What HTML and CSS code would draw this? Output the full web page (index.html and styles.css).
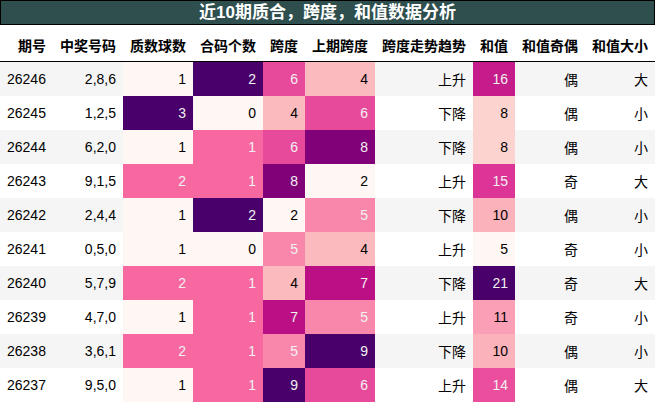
FILE: index.html
```html
<!DOCTYPE html>
<html lang="zh">
<head>
<meta charset="utf-8">
<link rel="stylesheet" href="styles.css">
</head>
<body>
<div class="wrap">
  <div class="title">近10期质合，跨度，和值数据分析</div>
  <table class="grid">
    <colgroup>
      <col class="w53"><col class="w70"><col class="w70"><col class="w70"><col class="w42"><col class="w70"><col class="w98"><col class="w42"><col class="w70"><col class="w70">
    </colgroup>
    <thead>
      <tr><th>期号</th><th>中奖号码</th><th>质数球数</th><th>合码个数</th><th>跨度</th><th>上期跨度</th><th>跨度走势趋势</th><th>和值</th><th>和值奇偶</th><th>和值大小</th></tr>
    </thead>
    <tbody>
      <tr class="odd"><td>26246</td><td>2,8,6</td><td style="background:#fff7f3" class="dk">1</td><td style="background:#49006a" class="lt">2</td><td style="background:#e84a9b" class="lt">6</td><td style="background:#fbbabd" class="dk">4</td><td>上升</td><td style="background:#c61b8b" class="lt">16</td><td>偶</td><td>大</td></tr>
      <tr><td>26245</td><td>1,2,5</td><td style="background:#49006a" class="lt">3</td><td style="background:#fff7f3" class="dk">0</td><td style="background:#fbbabd" class="dk">4</td><td style="background:#e84a9b" class="lt">6</td><td>下降</td><td style="background:#fdd3cf" class="dk">8</td><td>偶</td><td>小</td></tr>
      <tr class="odd"><td>26244</td><td>6,2,0</td><td style="background:#fff7f3" class="dk">1</td><td style="background:#f768a1" class="lt">1</td><td style="background:#e84a9b" class="lt">6</td><td style="background:#810178" class="lt">8</td><td>下降</td><td style="background:#fdd3cf" class="dk">8</td><td>偶</td><td>小</td></tr>
      <tr><td>26243</td><td>9,1,5</td><td style="background:#f768a1" class="lt">2</td><td style="background:#f768a1" class="lt">1</td><td style="background:#810178" class="lt">8</td><td style="background:#fff7f3" class="dk">2</td><td>上升</td><td style="background:#dd3497" class="lt">15</td><td>奇</td><td>大</td></tr>
      <tr class="odd"><td>26242</td><td>2,4,4</td><td style="background:#fff7f3" class="dk">1</td><td style="background:#49006a" class="lt">2</td><td style="background:#fff7f3" class="dk">2</td><td style="background:#f987ac" class="lt">5</td><td>下降</td><td style="background:#fbb2bb" class="dk">10</td><td>偶</td><td>小</td></tr>
      <tr><td>26241</td><td>0,5,0</td><td style="background:#fff7f3" class="dk">1</td><td style="background:#fff7f3" class="dk">0</td><td style="background:#f987ac" class="lt">5</td><td style="background:#fbbabd" class="dk">4</td><td>上升</td><td style="background:#fff7f3" class="dk">5</td><td>奇</td><td>小</td></tr>
      <tr class="odd"><td>26240</td><td>5,7,9</td><td style="background:#f768a1" class="lt">2</td><td style="background:#f768a1" class="lt">1</td><td style="background:#fbbabd" class="dk">4</td><td style="background:#bb1085" class="lt">7</td><td>下降</td><td style="background:#49006a" class="lt">21</td><td>奇</td><td>大</td></tr>
      <tr><td>26239</td><td>4,7,0</td><td style="background:#fff7f3" class="dk">1</td><td style="background:#f768a1" class="lt">1</td><td style="background:#bb1085" class="lt">7</td><td style="background:#f987ac" class="lt">5</td><td>上升</td><td style="background:#fa9fb5" class="dk">11</td><td>奇</td><td>小</td></tr>
      <tr class="odd"><td>26238</td><td>3,6,1</td><td style="background:#f768a1" class="lt">2</td><td style="background:#f768a1" class="lt">1</td><td style="background:#f987ac" class="lt">5</td><td style="background:#49006a" class="lt">9</td><td>下降</td><td style="background:#fbb2bb" class="dk">10</td><td>偶</td><td>小</td></tr>
      <tr><td>26237</td><td>9,5,0</td><td style="background:#fff7f3" class="dk">1</td><td style="background:#f768a1" class="lt">1</td><td style="background:#49006a" class="lt">9</td><td style="background:#e84a9b" class="lt">6</td><td>上升</td><td style="background:#ea4e9c" class="lt">14</td><td>偶</td><td>大</td></tr>
    </tbody>
  </table>
</div>
</body>
</html>
```
FILE: styles.css
```css
html, body {
  margin: 0;
  padding: 0;
  background: #ffffff;
}
body {
  font-family: "Liberation Sans", "Noto Sans CJK SC", sans-serif;
  font-size: 14px;
  color: #000;
}
.wrap {
  width: 655px;
}
.title {
  height: 23px;
  line-height: 23px;
  border: 1px solid #000;
  background: #2f4f4f;
  color: #ffffff;
  font-weight: bold;
  font-size: 17px;
  text-align: center;
}
.grid {
  width: 655px;
  table-layout: fixed;
  border-collapse: separate;
  border-spacing: 0;
}
.w53 { width: 53px; }
.w70 { width: 70px; }
.w42 { width: 42px; }
.w98 { width: 98px; }
.grid th {
  height: 32px;
  padding: 4px 7px 0 0;
  text-align: right;
  font-weight: bold;
  border-bottom: 1px solid #000;
  white-space: nowrap;
}
.grid td {
  height: 34px;
  padding: 0 7px 0 0;
  text-align: right;
  vertical-align: middle;
  white-space: nowrap;
}
.grid td:first-child {
  padding-left: 7px;
  text-align: left;
}
.grid tr.odd td {
  background: #f5f5f5;
}
.grid td.lt { color: #f1f1f1; }
.grid td.dk { color: #000000; }
```
